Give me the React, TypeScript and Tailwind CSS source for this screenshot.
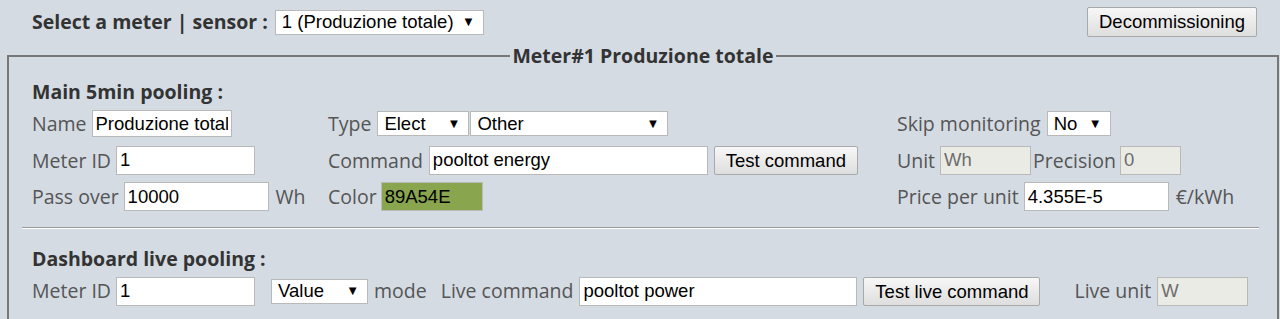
import React from "react"

const sans = "font-['Open_Sans',sans-serif]"
const arial = "font-['Liberation_Sans',Arial,sans-serif]"
const label = `${sans} text-[19.5px] text-[#555] whitespace-nowrap`
const heading = `${sans} text-[19.5px] font-bold text-[#333] whitespace-nowrap`

function Field({ value, w, disabled, green }: { value: string; w: string; disabled?: boolean; green?: boolean }) {
  const bg = green ? "bg-[#89a54e] text-black" : disabled ? "bg-[#ebebe6] text-[#6d6d6d]" : "bg-white text-black"
  return (
    <input
      readOnly
      value={value}
      className={`${arial} ${w} ${bg} h-[29px] shrink-0 border border-[#b9b9b9] px-[3px] text-[18.5px] outline-none`}
    />
  )
}

function Select({ value, w }: { value: string; w: string }) {
  return (
    <div
      className={`${arial} ${w} flex h-[25px] shrink-0 items-center justify-between border border-[#b9b9b9] bg-white pl-[6px] pr-[8px] text-[18.5px] text-black`}
    >
      <span className="whitespace-nowrap">{value}</span>
      <span className="text-[13px]">▼</span>
    </div>
  )
}

function Button({ children, w }: { children: React.ReactNode; w: string }) {
  return (
    <button
      className={`${arial} ${w} h-[29px] shrink-0 rounded-[2px] border border-[#a9a9a9] bg-gradient-to-b from-[#f7f7f7] to-[#dedede] text-[18.5px] text-black`}
    >
      {children}
    </button>
  )
}

export default function App() {
  return (
    <div className="h-[319px] w-[1280px] overflow-hidden bg-[#d4dbe3]">
      <div className="flex h-[44px] items-center justify-between pl-[32px] pr-[23px]">
        <div className="flex items-center gap-[7px]">
          <span className={heading}>Select a meter | sensor :</span>
          <Select value="1 (Produzione totale)" w="w-[209px]" />
        </div>
        <Button w="w-[170px] !h-[30px]">Decommissioning</Button>
      </div>

      <fieldset className="ml-[7px] mr-[1px] border-2 border-[#777] pb-6">
        <legend className={`${heading} mx-auto px-[2px] leading-[24px]`}>Meter#1 Produzione totale</legend>

        <div className="pl-[23px]">
          <div className={`${heading} mt-[12px] h-[24px] leading-[24px]`}>Main 5min pooling :</div>

          <div className="mt-[1px] grid h-[37px] grid-cols-[296px_569px_1fr] items-center">
            <div className="flex items-center gap-[5px]">
              <span className={label}>Name</span>
              <Field value="Produzione totale" w="w-[140px] !h-[27px]" />
            </div>
            <div className="flex items-center">
              <span className={`${label} mr-[6px]`}>Type</span>
              <Select value="Elect" w="w-[92px]" />
              <Select value="Other" w="ml-px w-[198px]" />
            </div>
            <div className="flex items-center gap-[6px]">
              <span className={label}>Skip monitoring</span>
              <Select value="No" w="w-[64px]" />
            </div>
          </div>

          <div className="grid h-[36.5px] grid-cols-[296px_569px_1fr] items-center">
            <div className="flex items-center gap-[5px]">
              <span className={label}>Meter ID</span>
              <Field value="1" w="w-[139px]" />
            </div>
            <div className="flex items-center">
              <span className={`${label} mr-[6px]`}>Command</span>
              <Field value="pooltot energy" w="w-[279px]" />
              <Button w="ml-[6px] w-[144px]">Test command</Button>
            </div>
            <div className="flex items-center">
              <span className={`${label} mr-[5px]`}>Unit</span>
              <Field value="Wh" w="w-[91px]" disabled />
              <span className={`${label} ml-[2px] mr-[4px]`}>Precision</span>
              <Field value="0" w="w-[61px]" disabled />
            </div>
          </div>

          <div className="grid h-[36.5px] grid-cols-[296px_569px_1fr] items-center">
            <div className="flex items-center">
              <span className={`${label} mr-[5px]`}>Pass over</span>
              <Field value="10000" w="w-[145px]" />
              <span className={`${label} ml-[7px]`}>Wh</span>
            </div>
            <div className="flex items-center gap-[4px]">
              <span className={label}>Color</span>
              <Field value="89A54E" w="w-[102px]" green />
            </div>
            <div className="flex items-center">
              <span className={`${label} mr-[5px]`}>Price per unit</span>
              <Field value="4.355E-5" w="w-[145px]" />
              <span className={`${label} ml-[7px]`}>€/kWh</span>
            </div>
          </div>
        </div>

        <div className="ml-[13px] mr-[18px] mt-[12px] border-t border-b border-t-[#9a9a9a] border-b-white" />

        <div className="pl-[23px]">
          <div className={`${heading} mt-[18px] h-[24px] leading-[24px]`}>Dashboard live pooling :</div>
          <div className="mt-[2px] flex h-[36px] items-center">
            <span className={`${label} mr-[5px]`}>Meter ID</span>
            <Field value="1" w="w-[139px]" />
            <Select value="Value" w="ml-[16px] w-[97px]" />
            <span className={`${label} ml-[6px]`}>mode</span>
            <span className={`${label} ml-[14px] mr-[6px]`}>Live command</span>
            <Field value="pooltot power" w="w-[278px]" />
            <Button w="ml-[6px] w-[177px]">Test live command</Button>
            <span className={`${label} ml-[34px] mr-[6px]`}>Live unit</span>
            <Field value="W" w="w-[91px]" disabled />
          </div>
        </div>
      </fieldset>
    </div>
  )
}
